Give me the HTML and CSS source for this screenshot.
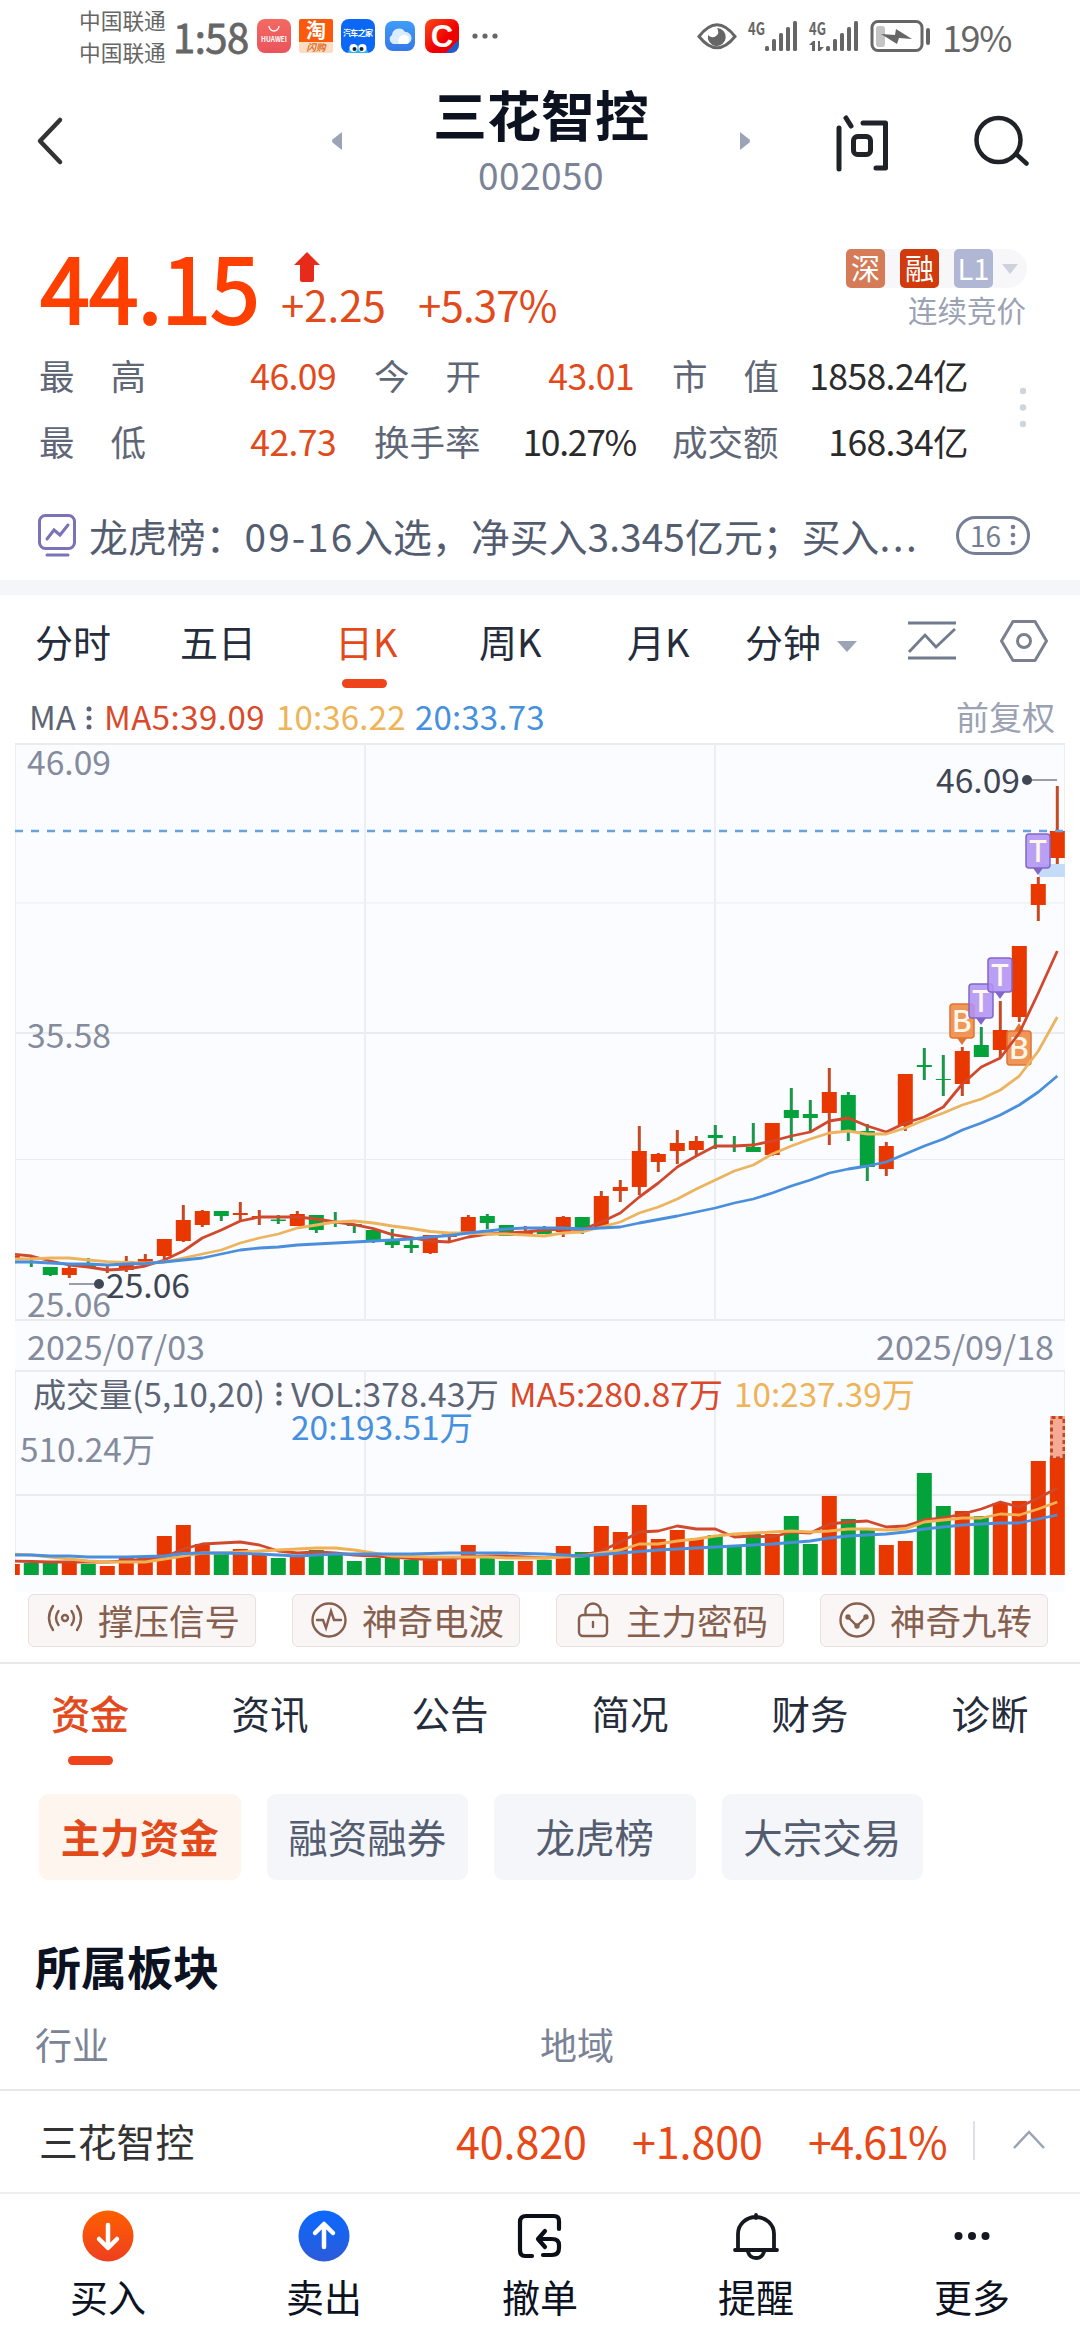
FILE: index.html
```html
<!DOCTYPE html>
<html lang="zh-CN">
<head>
    <meta charset="UTF-8">
    <meta name="viewport" content="width=device-width, initial-scale=1.0">
    <title>三花智控 002050</title>
    <link rel="stylesheet" href="styles.css">
</head>
<body>
    <div class="status-bar">
        <div class="carrier"><span>中国联通</span><span>中国联通</span></div>
        <div class="clock">1:58</div>
        <div class="apps">
            <div class="app app-huawei"><svg width="34" height="34" viewBox="0 0 34 34"><path d="M12 7a5 5 0 0 0 10 0" fill="none" stroke="#fff" stroke-width="1.3"/><text x="17" y="23" text-anchor="middle" textLength="26" lengthAdjust="spacingAndGlyphs" font-size="7" font-weight="bold" fill="#fff">HUAWEI</text></svg></div>
            <div class="app app-taobao"><svg width="34" height="34" viewBox="0 0 34 34"><text x="17" y="19" text-anchor="middle" font-size="20" font-weight="bold" fill="#fff">淘</text><text x="17" y="32" text-anchor="middle" font-size="9.500" font-weight="bold" font-style="italic" fill="#dd6d25">闪购</text></svg></div>
            <div class="app app-auto"><svg width="34" height="34" viewBox="0 0 34 34"><text x="17" y="17" text-anchor="middle" textLength="30" font-size="8" font-weight="bold" fill="#fff">汽车之家</text><path d="M6.500 34a11.500 13 0 0 1 21 0z" fill="#2fb4f5"/><circle cx="12.500" cy="29" r="4" fill="#fff"/><circle cx="21.500" cy="29" r="4" fill="#fff"/><circle cx="13.500" cy="30" r="2" fill="#123"/><circle cx="20.500" cy="30" r="2" fill="#123"/></svg></div>
            <div class="app app-cloud"><svg width="30" height="30" viewBox="0 0 30 30"><path d="M8 23a5 5 0 0 1-1-9 7 7 0 0 1 13-3 6 6 0 0 1 1 12z" fill="#dcecff"/><path d="M14 23a6 6 0 0 1 5-9 5 5 0 0 1 3 9z" fill="#fff"/></svg></div>
            <div class="app app-c"><svg width="34" height="34" viewBox="0 0 34 34"><text x="17" y="28" text-anchor="middle" font-family="Liberation Sans" font-size="31" font-weight="bold" fill="#fff">C</text></svg></div>
            <svg class="more-dots" width="26" height="8" viewBox="0 0 26 8" fill="#666"><circle cx="3" cy="4" r="2.600"/><circle cx="13" cy="4" r="2.600"/><circle cx="23" cy="4" r="2.600"/></svg>
        </div>
        <svg class="signals" width="234" height="36" viewBox="696 18 234 36" fill="#666">
            <path d="M698 36.500Q716 13 734 36.500Q716 59 698 36.500Z" fill="none" stroke="#666" stroke-width="3"/>
            <path d="M716 28a9 9 0 1 1-9 7q4 4 8 1t1-8z"/>
            <g font-size="17" font-weight="bold"><text x="747" y="35" textLength="17" lengthAdjust="spacingAndGlyphs">4G</text><text x="808" y="35" textLength="17" lengthAdjust="spacingAndGlyphs">4G</text></g>
            <g id="bars"><rect x="764" y="46" width="4" height="5" rx="1.500"/><rect x="771" y="39" width="4" height="12" rx="1.500"/><rect x="778" y="33" width="4" height="18" rx="1.500"/><rect x="785" y="27" width="4" height="24" rx="1.500"/><rect x="792" y="21" width="4" height="30" rx="1.500"/></g>
            <use href="#bars" x="61"/>
            <path d="M808 45l4-4h2v10h-3v-6zM817 41h2v6h4l-4 4h-2z"/>
            <rect x="871" y="21.500" width="50" height="29" rx="6" fill="none" stroke="#666" stroke-width="3"/>
            <rect x="875" y="26" width="9" height="21" rx="3" fill="#c4c4c4"/>
            <path d="M880 34l14 1 1-6 16 10-13-1-2 6z"/>
            <rect x="925" y="28" width="4" height="17" rx="2"/>
        </svg>
        <div class="battery">19%</div>
    </div>

    <div class="header">
        <svg class="back" width="26" height="50" viewBox="0 0 26 50"><path d="M23 4L3 25l20 21" fill="none" stroke="#333" stroke-width="4.500" stroke-linecap="round" stroke-linejoin="round"/></svg>
        <svg class="prev" width="12" height="20" viewBox="0 0 12 20"><path d="M11 1v18L1.500 11.500q-1-1.500 0-3z" fill="#9ba3b6"/></svg>
        <div class="title"><h1>三花智控</h1><span>002050</span></div>
        <svg class="next" width="12" height="20" viewBox="0 0 12 20"><path d="M1 1v18l9.500-7.500q1-1.500 0-3z" fill="#9ba3b6"/></svg>
        <svg class="ask" width="54" height="60" viewBox="835 112 54 60" fill="none" stroke="#1f2328" stroke-width="5" stroke-linecap="round" stroke-linejoin="round"><line x1="838" y1="129" x2="838" y2="170"/><line x1="845" y1="119" x2="850" y2="127"/><polyline points="862,124 884.500,124 884.500,169 875,169"/><rect x="852.500" y="137.500" width="17" height="18" rx="4"/></svg>
        <svg class="search" width="58" height="60" viewBox="970 112 58 60" fill="none" stroke="#1f2328" stroke-width="4.500" stroke-linecap="round"><circle cx="996.500" cy="141" r="22"/><path d="M1014 155l10.500 9.500"/></svg>
    </div>

    <div class="quote">
        <div class="price">44.15</div>
        <div class="change">
            <svg width="28" height="32" viewBox="0 0 28 32"><path d="M14 1L27 14h-6v15q0 2-2 2H9q-2 0-2-2V14H1z" fill="#e62b1b"/></svg>
            <div><span>+2.25</span><span class="pct">+5.37%</span></div>
        </div>
        <div class="market">
            <div class="badges"><span class="badge shen">深</span><span class="badge rong">融</span><span class="badge lv">L1</span><i class="caret"></i></div>
            <div>连续竞价</div>
        </div>
    </div>

    <div class="stats">
        <div class="label wide"><span>最</span><span>高</span></div><div class="value up">46.09</div>
        <div class="label wide"><span>今</span><span>开</span></div><div class="value up">43.01</div>
        <div class="label wide"><span>市</span><span>值</span></div><div class="value">1858.24亿</div>
        <div class="label wide"><span>最</span><span>低</span></div><div class="value up">42.73</div>
        <div class="label">换手率</div><div class="value rate">10.27%</div>
        <div class="label">成交额</div><div class="value">168.34亿</div>
        <svg class="stats-more" width="8" height="44" viewBox="0 0 8 44" fill="#cfd5dc"><circle cx="4" cy="5" r="3.200"/><circle cx="4" cy="21.500" r="3.200"/><circle cx="4" cy="38" r="3.200"/></svg>
    </div>

    <div class="news">
        <svg width="38" height="43" viewBox="0 0 38 43" fill="none" stroke="#7b72b8" stroke-width="3" stroke-linecap="round"><rect x="1.500" y="1.500" width="35" height="33" rx="6"/><path d="M9 25l7-9 6 5 8-10"/><path d="M9 41h21"/></svg>
        <div class="news-text">龙虎榜：<span class="news-date">09-16</span>入选，净买入3.345亿元；买入<span class="news-dots">...</span></div>
        <div class="news-count">16<svg width="6" height="22" viewBox="0 0 6 22" fill="#757e92"><circle cx="3" cy="3" r="2.300"/><circle cx="3" cy="11" r="2.300"/><circle cx="3" cy="19" r="2.300"/></svg></div>
    </div>

    <div class="periods">
        <span>分时</span><span>五日</span><span class="active">日K</span><span>周K</span><span>月K</span>
        <span class="minute">分钟<i class="caret"></i></span>
        <svg class="line-icon" width="50" height="42" viewBox="0 0 50 42" fill="none" stroke="#717b8e" stroke-width="2.800"><path d="M1 3h48M1 38h48M2 32l16-17 11 12L48 9"/></svg>
        <svg class="hex-icon" width="48" height="42" viewBox="0 0 48 42" fill="none" stroke="#7b8091" stroke-width="3" stroke-linejoin="round"><path d="M13 1.500h22L46.500 21 35 40.500H13L1.500 21z"/><circle cx="24" cy="21" r="6.500"/></svg>
    </div>

    <div class="ma-row">
        <span>MA</span><svg width="6" height="24" viewBox="0 0 6 24" fill="#5d6575"><circle cx="3" cy="3" r="2.500"/><circle cx="3" cy="12" r="2.500"/><circle cx="3" cy="21" r="2.500"/></svg>
        <span class="ma5">MA5:39.09</span><span class="ma10">10:36.22</span><span class="ma20">20:33.73</span>
        <span class="adjust">前复权</span>
    </div>

    <svg class="chart" id="chart" width="1080" height="852" viewBox="0 741 1080 852"></svg>

    <div class="signals-row">
        <div class="signal"><svg width="36" height="36" viewBox="0 0 36 36"><circle cx="18" cy="16" r="3"/><path d="M11.500 9q-5 7 0 14M24.500 9q5 7 0 14M6 4q-8 12 0 24M30 4q8 12 0 24"/></svg>撑压信号</div>
        <div class="signal"><svg width="36" height="36" viewBox="0 0 36 36"><circle cx="18" cy="18" r="16.500"/><path d="M6 18h6l3 8 5-17 3 9h7"/></svg>神奇电波</div>
        <div class="signal"><svg width="36" height="36" viewBox="0 0 36 36"><rect x="4" y="13" width="28" height="21" rx="4"/><path d="M10.500 13v-4a7.500 7.500 0 0 1 15 0v4M18 20v5"/></svg>主力密码</div>
        <div class="signal"><svg width="36" height="36" viewBox="0 0 36 36"><circle cx="18" cy="18" r="16.500"/><path d="M9 15l9 9 9-9"/><circle cx="9" cy="15" r="1.500"/><circle cx="18" cy="24" r="1.500"/><circle cx="27" cy="15" r="1.500"/></svg>神奇九转</div>
    </div>

    <div class="tabs">
        <span class="active">资金</span><span>资讯</span><span>公告</span><span>简况</span><span>财务</span><span>诊断</span>
    </div>

    <div class="chips">
        <span class="chip active">主力资金</span><span class="chip">融资融券</span><span class="chip">龙虎榜</span><span class="chip">大宗交易</span>
    </div>

    <h2>所属板块</h2>
    <div class="sector-head"><span>行业</span><span>地域</span></div>

    <div class="ticker">
        <span class="name">三花智控</span>
        <span class="num">40.820</span><span class="num">+1.800</span><span class="num pct">+4.61%</span>
        <i class="sep"></i>
        <svg width="34" height="20" viewBox="0 0 34 20"><path d="M2 18L17 2l15 16" fill="none" stroke="#9aa2b4" stroke-width="2.500"/></svg>
    </div>

    <div class="bottom-nav">
        <div class="item">
            <svg width="52" height="52" viewBox="0 0 52 52"><defs><linearGradient id="buy" x2="0" y2="1"><stop offset="0" stop-color="#ff5f00"/><stop offset="1" stop-color="#ee3f1f"/></linearGradient></defs><circle cx="26" cy="26" r="25.500" fill="url(#buy)"/><path d="M26 15v22M17 29l9 9 9-9" fill="none" stroke="#fff" stroke-width="4.500" stroke-linecap="round" stroke-linejoin="round"/></svg>
            买入
        </div>
        <div class="item">
            <svg width="52" height="52" viewBox="0 0 52 52"><defs><linearGradient id="sell" x2="0" y2="1"><stop offset="0" stop-color="#0c69ff"/><stop offset="1" stop-color="#2b5bd9"/></linearGradient></defs><circle cx="26" cy="26" r="25.500" fill="url(#sell)"/><path d="M26 37V15M17 23l9-9 9 9" fill="none" stroke="#fff" stroke-width="4.500" stroke-linecap="round" stroke-linejoin="round"/></svg>
            卖出
        </div>
        <div class="item">
            <svg width="52" height="52" viewBox="0 0 52 52" fill="none" stroke="#0b0f17" stroke-width="4.200" stroke-linecap="round" stroke-linejoin="round"><path d="M45 19V11q0-5-5-5H12q-6 0-6 6v28q0 6 5 6h7M29 45h9q7 0 7-7v-3q0-6-7-6H25M31 21l-7 8 7 8"/></svg>
            撤单
        </div>
        <div class="item">
            <svg width="52" height="52" viewBox="0 0 52 52" fill="none" stroke="#14181f" stroke-width="3.800" stroke-linecap="round"><path d="M26 5v3M8 39V24a18 17 0 0 1 36 0v15M5 40h42M18 42q2 6 8 6t8-6"/></svg>
            提醒
        </div>
        <div class="item">
            <svg width="52" height="52" viewBox="0 0 52 52" fill="#14181f"><circle cx="12.500" cy="26" r="4"/><circle cx="26" cy="26" r="4"/><circle cx="39.500" cy="26" r="4"/></svg>
            更多
        </div>
    </div>

    <script src="chart.js"></script>
</body>
</html>
```

FILE: styles.css
```css
* {
    box-sizing: border-box;
}
body {
    margin: 0;
    width: 1080px;
    height: 2340px;
    overflow: hidden;
    background: #fff;
    color: #252c3b;
    font-family: "Noto Sans CJK SC", "Noto Sans", sans-serif;
}
svg {
    display: block;
    flex: none;
    overflow: visible;
}
.status-bar {
    display: flex;
    align-items: center;
    height: 72px;
    padding-left: 79px;
    color: #666;
}
.carrier {
    display: flex;
    flex-direction: column;
    width: 94px;
    font-size: 21.7px;
    line-height: 32px;
}
.clock {
    width: 84px;
    font-size: 40px;
    -webkit-text-stroke: 0.8px #666;
    letter-spacing: -0.5px;
    line-height: 70px;
}
.apps {
    display: flex;
    align-items: center;
    width: 440px;
}
.app {
    width: 34px;
    height: 34px;
    margin-right: 8px;
    border-radius: 8px;
}
.app-huawei {
    background: linear-gradient(#f46a62, #e9545c);
}
.app-taobao {
    border-radius: 2px;
    background: linear-gradient(#fb5a0c 68%, #fddcc4 68%);
}
.app-auto {
    background: #0b68f5;
    margin-right: 10px;
}
.app-cloud {
    width: 30px;
    height: 30px;
    background: linear-gradient(#3f9cf8, #3579e6);
    margin-right: 10px;
}
.app-c {
    background: linear-gradient(135deg, #fb4a16, #ee0000 60%, #ee0000 80%, #2659c5 80%);
    margin-right: 13px;
}
.battery {
    margin-left: 11px;
    font-size: 36px;
    letter-spacing: -1.4px;
    line-height: 70px;
}
.header {
    display: flex;
    align-items: center;
    height: 138px;
    padding-left: 37px;
}
.prev {
    margin-left: 268px;
}
.title {
    display: flex;
    flex-direction: column;
    align-items: center;
    width: 396px;
    height: 138px;
    padding-top: 4px;
}
.title h1 {
    margin: 0;
    font-size: 54px;
    font-weight: bold;
    line-height: 76px;
    color: #0c121f;
}
.title span {
    font-size: 37px;
    line-height: 44px;
    letter-spacing: 0.5px;
    color: #7b8397;
}
.ask {
    margin-left: 85px;
}
.search {
    margin-left: 82px;
}
.quote {
    display: flex;
    height: 134px;
    padding-left: 40px;
}
.price {
    width: 241px;
    height: 114px;
    margin-top: 20px;
    font-size: 90px;
    line-height: 110px;
    letter-spacing: -1.2px;
    -webkit-text-stroke: 1.8px #ff3f00;
    color: #ff3f00;
}
.change {
    width: 500px;
    padding-top: 41px;
    font-size: 42px;
    line-height: 44px;
    color: #e2491b;
}
.change svg {
    margin: 0 0 0 12px;
}
.change div {
    margin-top: -1px;
}
.pct {
    margin-left: 32px;
    letter-spacing: -0.8px;
}
.market {
    width: 245px;
    padding-top: 39px;
    text-align: right;
    font-size: 29.5px;
    line-height: 42px;
    color: #9aa2b4;
}
.badges {
    display: flex;
    align-items: center;
    gap: 15px;
    width: 181px;
    height: 39px;
    margin-left: 65px;
    border-radius: 6px 20px 20px 6px;
    background: #f7f7fa;
}
.badge {
    width: 39px;
    height: 39px;
    border-radius: 5px;
    font-size: 29px;
    line-height: 37px;
    text-align: center;
    color: #fff;
}
.shen {
    background: #d57b58;
}
.rong {
    background: #d03a0d;
}
.lv {
    background: #b0b7d4;
}
.caret {
    display: inline-block;
    border: 8px solid transparent;
    border-top: 10px solid #cdd3dc;
    border-bottom: 0;
}
.badges .caret {
    margin-left: -6px;
}
.stats {
    display: grid;
    grid-template-columns: 107px 228px 107px 191px 107px 189px;
    grid-template-rows: 66px 66px;
    position: relative;
    padding-left: 39px;
    font-size: 35.5px;
    line-height: 62px;
    height: 146px;
}
.label {
    color: #5f6777;
}
.label.wide {
    display: flex;
    justify-content: space-between;
}
.value {
    margin-right: 38px;
    justify-self: end;
    letter-spacing: -0.6px;
    white-space: nowrap;
    color: #2b2b2b;
}
.value:nth-child(6n) {
    margin-right: 0;
}
.value.rate {
    margin-right: 36px;
    letter-spacing: -1.3px;
}
.value.up {
    color: #e2491b;
}
.stats-more {
    position: absolute;
    left: 1019px;
    top: 42px;
}
.news {
    display: flex;
    align-items: center;
    height: 90px;
    padding-left: 38px;
    color: #545d70;
}
.news-text {
    width: 865px;
    margin-left: 13px;
    font-size: 38.8px;
    letter-spacing: 0.1px;
    line-height: 84px;
    white-space: nowrap;
}
.news-date {
    letter-spacing: 2px;
}
.news-dots {
    letter-spacing: 2.5px;
}
.news-count {
    display: flex;
    align-items: center;
    justify-content: center;
    gap: 9px;
    width: 74px;
    height: 39px;
    margin-left: 2px;
    border: 3px solid #757e92;
    border-radius: 20px;
    font-size: 28px;
    line-height: 30px;
    color: #757e92;
}
.periods {
    display: flex;
    align-items: center;
    height: 114px;
    border-top: 15px solid #f4f6fa;
    padding-left: 35px;
    font-size: 38px;
    line-height: 92px;
    white-space: nowrap;
}
.periods span {
    position: relative;
    width: 145px;
    height: 99px;
}
.periods span:nth-child(2) {
    width: 155px;
}
.periods span:nth-child(3) {
    width: 144px;
}
.periods span:nth-child(4) {
    width: 148px;
}
.periods span:nth-child(5) {
    width: 118px;
}
.periods .minute {
    width: 161px;
}
.minute .caret {
    margin-left: 16px;
    border-width: 11px 10px 0;
    border-top-color: #9ba3b6;
    vertical-align: 5px;
}
.periods .active,
.tabs .active {
    color: #e2491b;
}
.active::after {
    content: "";
    position: absolute;
    left: 7px;
    bottom: 6px;
    width: 45px;
    height: 9px;
    border-radius: 5px;
    background: #ee431b;
}
.chip.active::after {
    display: none;
}
.line-icon {
    margin: -8px 0 0 1px;
}
.hex-icon {
    margin: -8px 0 0 43px;
}
.ma-row {
    display: flex;
    align-items: center;
    height: 47px;
    padding: 0 25px 2px 29px;
    font-size: 33px;
    line-height: 43px;
    color: #5d6575;
}
.ma-row svg {
    margin: 3px 12px 0 10px;
}
.ma5 {
    width: 172px;
    letter-spacing: 0.5px;
    color: #d9492a;
}
.ma10 {
    width: 139px;
    letter-spacing: 0.2px;
    color: #eeb458;
}
.ma20 {
    letter-spacing: 0.2px;
    color: #4590df;
}
.adjust {
    margin-left: auto;
    color: #9aa2b4;
}
.chart {
    font-size: 33px;
}
.signals-row {
    display: flex;
    gap: 36px;
    height: 71px;
    padding: 1px 0 0 28px;
    border-bottom: 2px solid #e9e9eb;
}
.signal {
    display: flex;
    align-items: center;
    width: 228px;
    height: 53px;
    padding-left: 18px;
    gap: 15px;
    border: 1.5px solid #e9dfdf;
    border-radius: 6px;
    background: #faf6f5;
    font-size: 35.5px;
    line-height: 46px;
    padding-bottom: 2px;
    color: #86604f;
    white-space: nowrap;
}
.signal svg {
    fill: none;
    stroke: #86604f;
    stroke-width: 2.4;
    stroke-linecap: round;
    margin-top: 1px;
}
.tabs {
    display: flex;
    height: 104px;
}
.tabs span {
    position: relative;
    width: 180px;
    text-align: center;
    font-size: 38.5px;
    line-height: 96px;
}
.tabs .active {
    -webkit-text-stroke: 0.8px #e2491b;
}
.tabs .active::after {
    left: 68px;
    bottom: 3px;
}
.chips {
    display: flex;
    gap: 26px;
    padding: 26px 0 0 39px;
    height: 161px;
}
.chip {
    width: 201.5px;
    height: 86px;
    border-radius: 9px;
    background: #f4f6fa;
    text-align: center;
    font-size: 39.5px;
    line-height: 84px;
    color: #545d70;
}
.chip.active {
    background: #fff5ef;
    font-weight: bold;
    color: #e2491b;
}
h2 {
    margin: 0 0 19px 35px;
    height: 72px;
    font-size: 46px;
    line-height: 72px;
    color: #0c121f;
}
.sector-head {
    display: flex;
    height: 69px;
    padding: 2px 0 0 35px;
    font-size: 37px;
    line-height: 44px;
    color: #7b8397;
}
.sector-head span {
    width: 505px;
}
.ticker {
    display: flex;
    align-items: center;
    height: 103px;
    border-top: 2px solid #e8e8ea;
    padding-left: 39px;
    line-height: 90px;
}
.name,
.num {
    margin-top: -4px;
}
.name {
    width: 417px;
    font-size: 38.8px;
    color: #333;
}
.num {
    width: 176px;
    font-size: 43px;
    letter-spacing: -0.1px;
    color: #e84716;
    white-space: nowrap;
}
.ticker .pct {
    width: 165px;
    margin-left: 0;
    letter-spacing: -1.5px;
}
.sep {
    width: 2px;
    height: 39px;
    background: #dfe1e6;
    margin: -2px 37px 0 0;
}
.ticker svg {
    margin-top: -4px;
}
.bottom-nav {
    display: flex;
    height: 149px;
    border-top: 2px solid #eee;
}
.item {
    display: flex;
    flex-direction: column;
    align-items: center;
    width: 216px;
    padding-top: 16px;
    font-size: 38px;
    line-height: 54px;
    color: #0c121f;
}
.item svg {
    margin-bottom: 7px;
}
```

FILE: chart.js
```javascript
// each row: colour, high, body top, body bottom, low, top of the volume bar
const candles = [
    ['r', 1254, 1256, 1259, 1259, 1564], ['g', 1257, 1261, 1263, 1267, 1563], ['g', 1267, 1267, 1275, 1276, 1563], ['r', 1265, 1268, 1275, 1278, 1563],
    ['g', 1258, 1265, 1267, 1267, 1564], ['r', 1266, 1269, 1270, 1273, 1566], ['r', 1256, 1261, 1270, 1272, 1558], ['r', 1254, 1259, 1264, 1266, 1557],
    ['r', 1239, 1239, 1256, 1259, 1536], ['r', 1205, 1220, 1241, 1242, 1525], ['r', 1210, 1211, 1225, 1227, 1544], ['g', 1211, 1211, 1216, 1221, 1554],
    ['r', 1202, 1213, 1215, 1220, 1549], ['r', 1210, 1216, 1218, 1225, 1555], ['g', 1215, 1219.5, 1221, 1224, 1558], ['r', 1211, 1214, 1226, 1226, 1557],
    ['g', 1215, 1215, 1230, 1233, 1550], ['g', 1212, 1221, 1223, 1227, 1555], ['g', 1224, 1224, 1226, 1233, 1561], ['g', 1230, 1230, 1241, 1243, 1558],
    ['g', 1229, 1240, 1245, 1248, 1557], ['g', 1237, 1245, 1248, 1253, 1560], ['r', 1235, 1235, 1253, 1254, 1560], ['r', 1234, 1234.5, 1237, 1241, 1560],
    ['r', 1215, 1217, 1232, 1232, 1545], ['g', 1214, 1216, 1223, 1229, 1557], ['g', 1225, 1225, 1236, 1236, 1561], ['r', 1226, 1231.5, 1234, 1234, 1561],
    ['g', 1226, 1229, 1234, 1234, 1560], ['r', 1216, 1217, 1232, 1237, 1546], ['g', 1217, 1217, 1229, 1234, 1552], ['r', 1191, 1196, 1229, 1229, 1526],
    ['r', 1180, 1187, 1191, 1202, 1532], ['r', 1126, 1151, 1187, 1195, 1505], ['r', 1153, 1154, 1162, 1172, 1539], ['r', 1130, 1143, 1151, 1164, 1530],
    ['r', 1136, 1141, 1150, 1155, 1539], ['g', 1125, 1135, 1138, 1149, 1535], ['g', 1136, 1145, 1146, 1152, 1546], ['g', 1123, 1147, 1152, 1152, 1532],
    ['r', 1123, 1123, 1155, 1156, 1534], ['g', 1088, 1110, 1118, 1141, 1516], ['g', 1100, 1114, 1118, 1131, 1544], ['r', 1068, 1092, 1113, 1145, 1496],
    ['g', 1092, 1095, 1131, 1141, 1519], ['g', 1124, 1131, 1167, 1181, 1530], ['r', 1142, 1146, 1169, 1176, 1545], ['r', 1074, 1074, 1126, 1131, 1541],
    ['g', 1048, 1065, 1067, 1080, 1473], ['g', 1055, 1079, 1080, 1096, 1506], ['r', 1047, 1051, 1084, 1096, 1511], ['g', 1027, 1045, 1057, 1057, 1516],
    ['r', 1001, 1030, 1050, 1058, 1503], ['r', 946, 946, 1017, 1022, 1501], ['r', 877, 884, 905, 921, 1461], ['r', 786, 831, 858, 864, 1457]
];

const ma = {
    '#d2482c': [1254, 1256, 1261, 1265, 1267, 1270, 1269, 1266, 1260, 1251, 1238, 1230, 1221, 1217, 1217, 1217, 1219, 1222, 1224.7, 1228.7, 1234.7, 1237.7, 1241, 1242, 1237, 1234, 1233, 1232, 1230, 1229, 1229.5, 1222, 1213, 1197, 1183, 1167, 1156, 1146, 1146, 1145, 1141, 1136, 1132, 1121, 1118, 1126, 1132, 1123, 1117, 1107, 1084, 1067, 1058, 1033, 993, 951],
    '#ecb45f': [1259, 1259, 1258, 1258, 1260, 1261.7, 1262.5, 1263, 1262, 1258, 1254, 1250, 1243, 1238, 1234, 1228, 1225, 1222, 1221, 1223, 1226, 1228.5, 1231.5, 1233, 1233, 1234, 1234, 1235, 1236, 1233, 1232, 1227, 1222, 1213, 1207, 1199, 1189, 1180, 1171, 1165, 1154, 1146, 1139, 1133, 1131, 1134, 1134, 1128, 1120, 1113, 1105, 1099, 1090, 1076, 1051, 1017],
    '#4a8fdd': [1262, 1262, 1263, 1264, 1264, 1265, 1264, 1263.5, 1262, 1260, 1258, 1254, 1250, 1248, 1247, 1245, 1244, 1243, 1242, 1241, 1240, 1239, 1237, 1235.5, 1233, 1231, 1229, 1228, 1228, 1228, 1229, 1228, 1227, 1223, 1219.5, 1216, 1212, 1208, 1203, 1199, 1193, 1186, 1180, 1173, 1169, 1166, 1162, 1154, 1146, 1139, 1130, 1123, 1115, 1105, 1092, 1076]
};

const volMa = {
    '#d2482c': [1561, 1561.5, 1562, 1562, 1562, 1562, 1561, 1559, 1557, 1549, 1544, 1543, 1542, 1545, 1551, 1553, 1552, 1553, 1555, 1556, 1557, 1558.5, 1559.5, 1559, 1557, 1556, 1556, 1557, 1558, 1557, 1555, 1551, 1542, 1532, 1531, 1526, 1529, 1529, 1537, 1536, 1537, 1532, 1533, 1524, 1522, 1521, 1527, 1526, 1520, 1518, 1514, 1509, 1502, 1507, 1498, 1488],
    '#f0b154': [1554, 1555, 1557, 1559, 1561, 1562, 1562, 1562, 1559, 1556, 1553, 1553, 1552, 1551, 1550, 1549, 1548, 1548, 1550, 1553, 1556, 1556.5, 1557, 1557, 1557, 1557, 1558, 1558, 1558, 1557, 1556, 1553, 1550, 1544, 1544, 1541, 1539, 1536, 1534, 1533, 1532, 1531, 1532, 1531, 1529, 1529, 1530, 1529, 1522, 1520, 1518, 1518, 1514, 1515, 1509, 1502],
    '#4a8fdd': [1555, 1555, 1556, 1556, 1557, 1557, 1557, 1556.5, 1556, 1553.5, 1553, 1553, 1553.5, 1554, 1555, 1556, 1555, 1554, 1554, 1554, 1554, 1554, 1553.5, 1553, 1553, 1553, 1553, 1553.5, 1554, 1555, 1556, 1554.5, 1553, 1551.5, 1550, 1549, 1548, 1547, 1546, 1545, 1544, 1542.5, 1541, 1538, 1536, 1535, 1534, 1532, 1529, 1527, 1525, 1524, 1523, 1523, 1519, 1515]
};

const STEP = 19;
const x = i => 12.3 + STEP * i;
const fill = { r: '#e83800', g: '#03a23b' };
const wick = { r: '#c54a22', g: '#1c9748' };

let out = '<clipPath id="plot"><rect x="15" y="741" width="1050" height="852"/></clipPath>';
out += '<rect x="15" y="744" width="1050" height="848" fill="#fbfcff"/>';

// grid
const rows = [[744, 2], [903, 1], [1033, 2], [1159.5, 1], [1320, 2], [1371, 2], [1495, 2]];
rows.forEach(([y, w]) => out += `<line x1="15" x2="1065" y1="${y}" y2="${y}" stroke="#e9ebef" stroke-width="${w}"/>`);
[15.5, 365, 715, 1064.5].forEach(v => {
    const w = v === 365 || v === 715 ? 2 : 1;
    out += `<path d="M${v} 744V1320M${v} 1371V1575" stroke="#eceef2" stroke-width="${w}"/>`;
});

function label(str, lx, y, width, color, anchor) {
    out += `<text x="${lx}" y="${y}" textLength="${width}" lengthAdjust="spacingAndGlyphs" fill="${color}" text-anchor="${anchor || 'start'}">${str}</text>`;
}

label('46.09', 27, 775, 84, '#848b9c');
label('35.58', 27, 1048, 84, '#848b9c');
label('25.06', 27, 1317, 84, '#848b9c');
label('2025/07/03', 27, 1360, 178, '#848b9c');
label('2025/09/18', 1054, 1360, 178, '#848b9c', 'end');

// gap between the last two sessions
out += '<rect x="1039" y="864" width="26" height="13" fill="#c5dcf8"/>';

out += '<g clip-path="url(#plot)">';
candles.forEach(([c, hi, top, bottom, lo, vol], i) => {
    out += `<rect x="${x(i) - 1.5}" y="${hi}" width="3" height="${lo - hi}" fill="${wick[c]}"/>`;
    out += `<rect x="${x(i) - 7.5}" y="${top}" width="15" height="${bottom - top}" fill="${fill[c]}"/>`;
    out += `<rect x="${x(i) - 7.5}" y="${vol}" width="15" height="${1575 - vol}" fill="${fill[c]}"/>`;
});
out += '<line x1="15" x2="1063" y1="831" y2="831" stroke="#68a2df" stroke-width="2.3" stroke-dasharray="8 8"/>';

// buy / trade markers
function marker(letter, cx, y, below) {
    const color = letter === 'B' ? '#ef8842' : '#b193f2';
    const edge = letter === 'B' ? '#df7433' : '#8266c8';
    const tip = below ? `M${cx - 5} ${y}l5 -8l5 8z` : `M${cx - 5} ${y + 34}l5 7l5 -7z`;
    out += `<path d="${tip}" fill="${edge}"/><rect x="${cx - 12}" y="${y}" width="24" height="34" rx="3" fill="${color}" fill-opacity="0.88" stroke="${edge}" stroke-width="1.5"/>`;
    out += `<text x="${cx}" y="${y + 28}" text-anchor="middle" font-family="Noto Sans" font-size="31" font-weight="500" fill="#fff8e8">${letter}</text>`;
}
marker('B', 962, 1004);
marker('T', 981, 984);
marker('T', 1000, 958);
marker('T', 1038, 834);
marker('B', 1019, 1031, true);

[ma, volMa].forEach(set => {
    Object.entries(set).forEach(([color, ys]) => {
        const points = ys.map((y, i) => `${x(i)},${y}`).join(' ');
        out += `<polyline points="${points}" fill="none" stroke="${color}" stroke-width="2.8" stroke-linejoin="round"/>`;
    });
});

// estimated full-day volume
out += '<rect x="1050" y="1416" width="15" height="42" fill="#f5aa95"/><path d="M1064 1458V1417.500H1051.500V1458H1065" fill="none" stroke="#c8441c" stroke-width="3" stroke-dasharray="4 3"/>';
out += '</g>';

// high and low callouts
out += '<path d="M1027 780H1057M69 1284H99" stroke="#9a9fa9" stroke-width="2"/><circle cx="1027" cy="780" r="5" fill="#414855"/><circle cx="99" cy="1284" r="5" fill="#414855"/>';
label('46.09', 936, 793, 84, '#3f4653');
label('25.06', 106, 1298, 84, '#3f4653');

// volume legend
label('成交量(5,10,20)', 33, 1407, 232, '#5d6575');
[1385, 1394, 1403].forEach(y => out += `<circle cx="279" cy="${y}" r="2.600" fill="#5d6575"/>`);
label('VOL:378.43万', 291, 1407, 208, '#5d6575');
label('MA5:280.87万', 509, 1407, 214, '#d9492a');
label('10:237.39万', 734, 1407, 181, '#eeb458');
label('20:193.51万', 291, 1440, 182, '#4590df');
label('510.24万', 20, 1462, 135, '#848b9c');

document.getElementById('chart').innerHTML = out;
```
